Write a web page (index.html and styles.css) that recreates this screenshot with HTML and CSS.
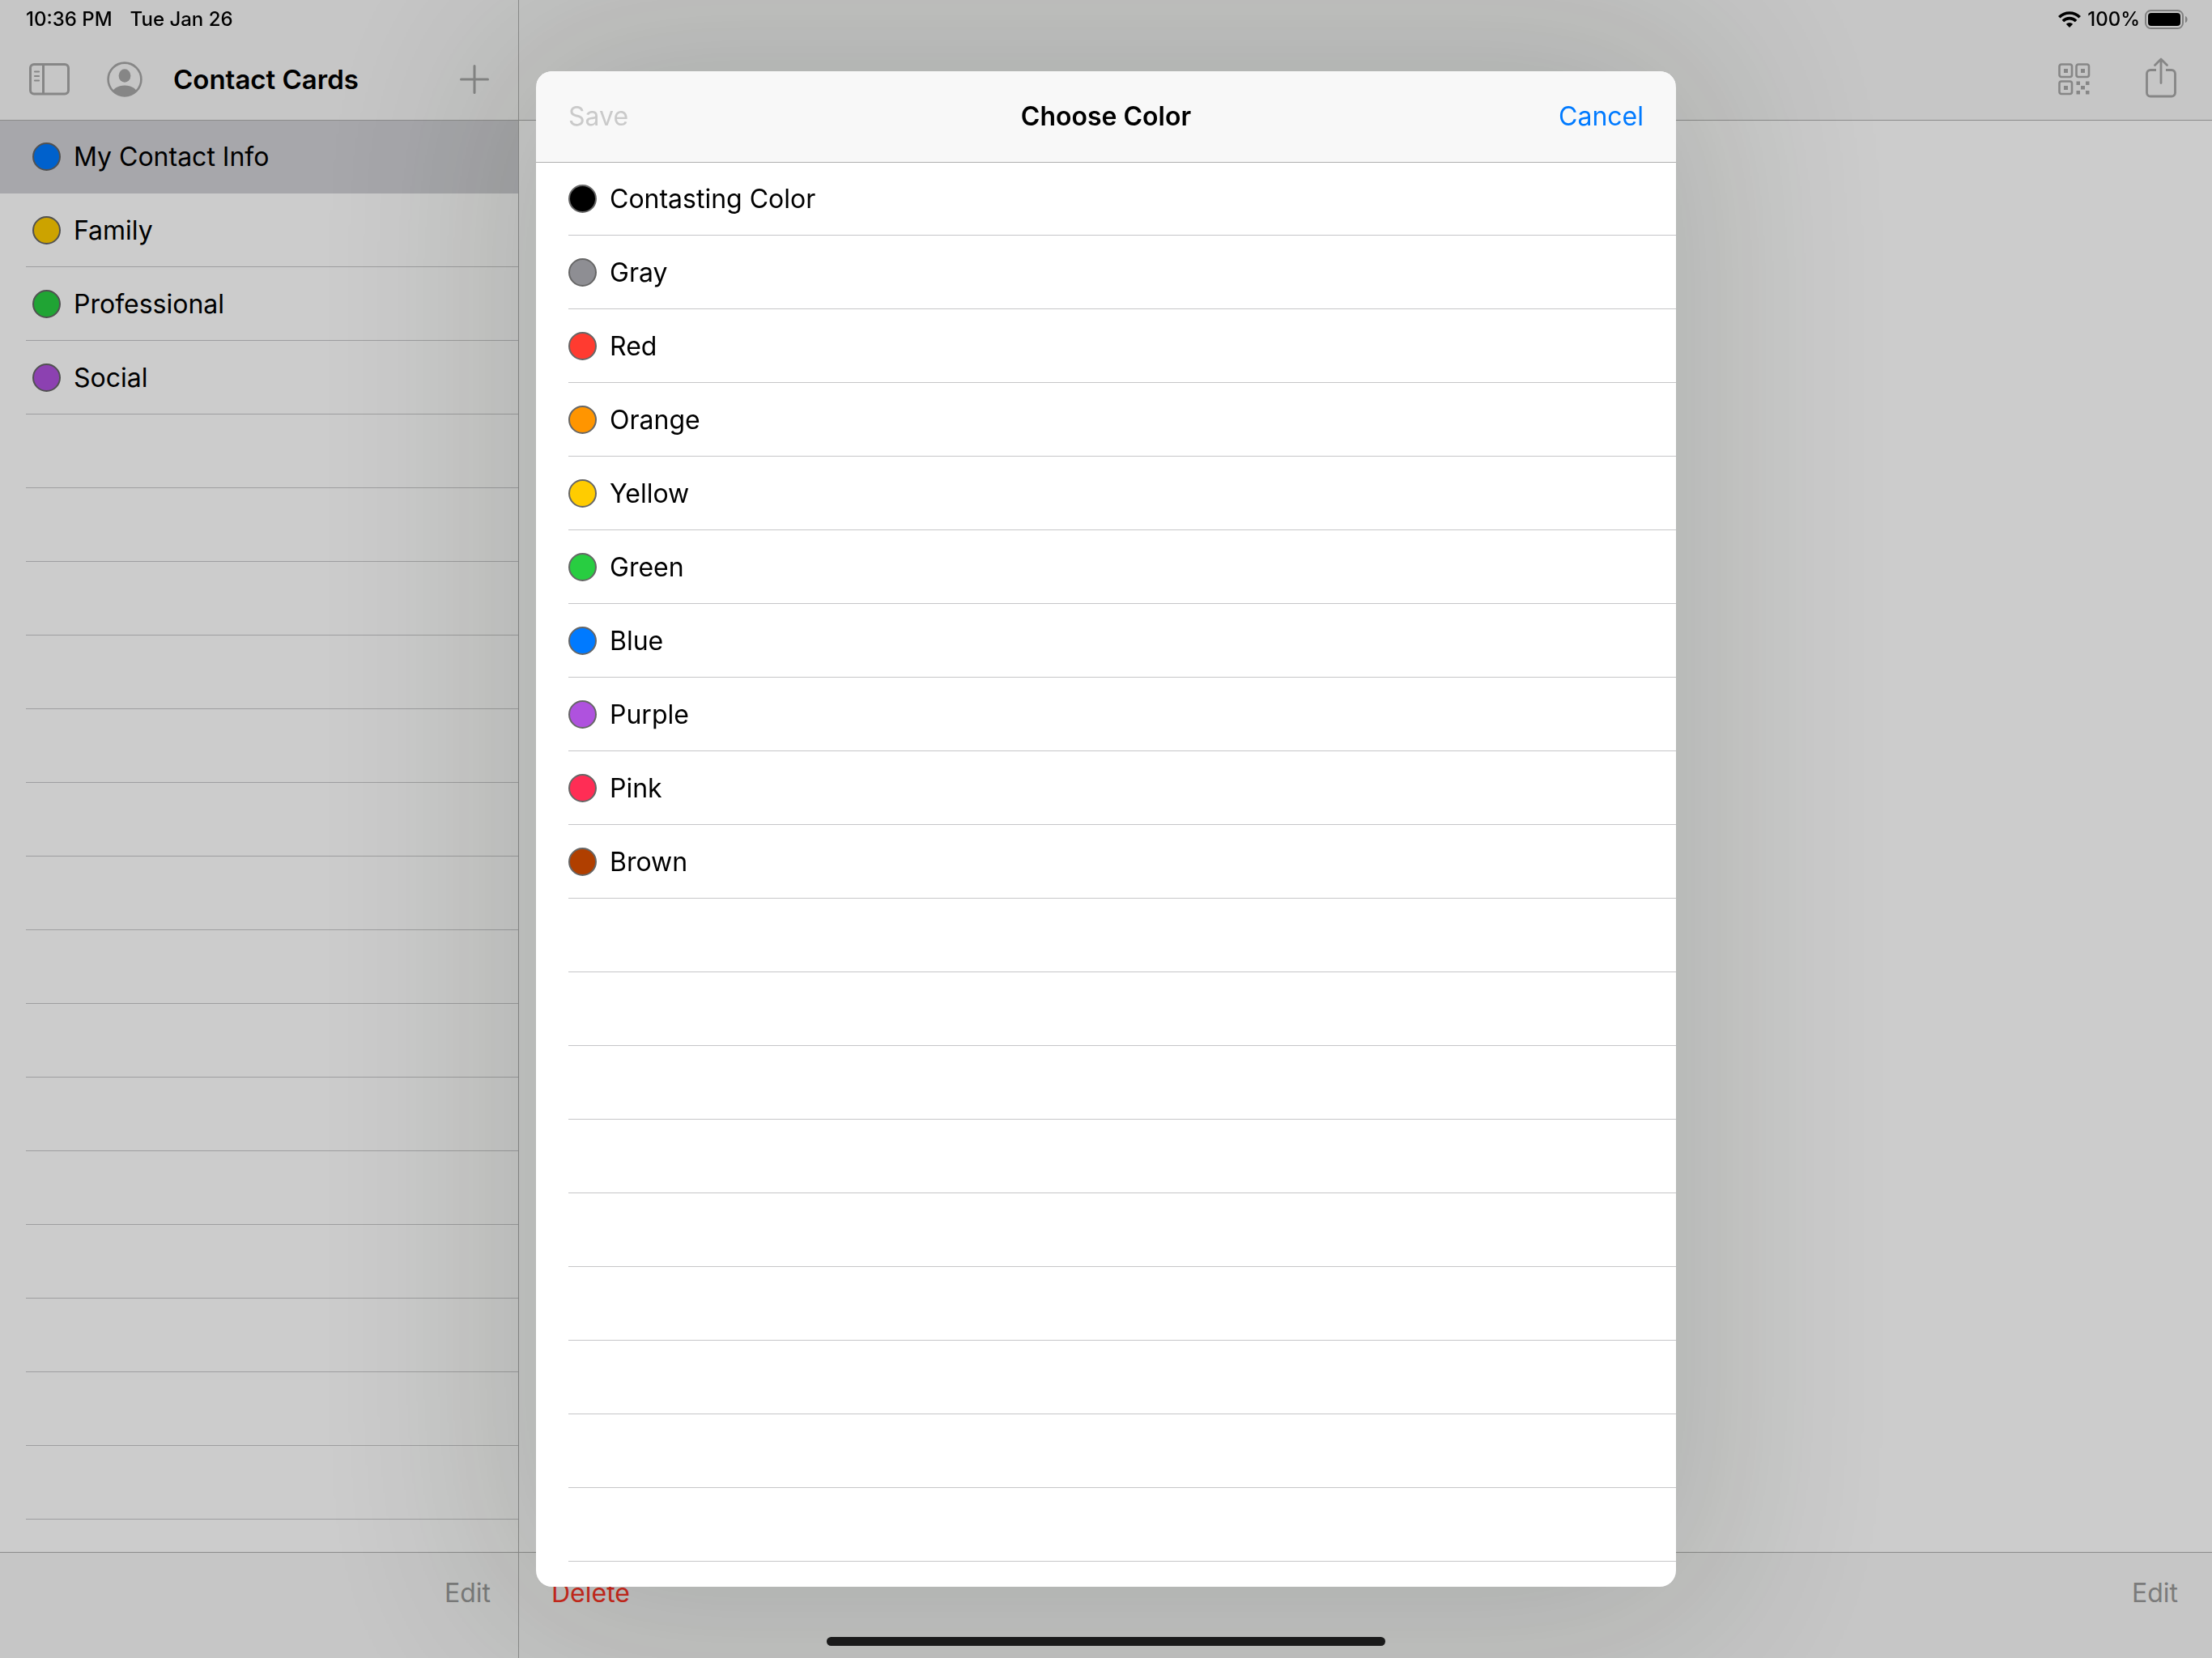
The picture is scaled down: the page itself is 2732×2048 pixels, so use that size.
FILE: index.html
```html
<!DOCTYPE html>
<html lang="en">
<head>
<meta charset="utf-8">
<meta name="viewport" content="width=device-width, initial-scale=1">
<title>Contact Cards</title>
<link rel="stylesheet" href="styles.css">
</head>
<body>
<div class="app">
  <aside class="sidebar">
    <header class="bar bar-top">
      <div class="toolbar">
        <button class="icon-button" type="button" aria-label="Toggle sidebar">
          <svg width="50" height="40" viewBox="0 0 50 40" fill="none" stroke="currentColor" stroke-width="3">
            <rect x="1.5" y="1.5" width="47" height="36.500" rx="4.500"/>
            <path d="M17.500 2v36"/>
            <path d="M7 10.500h5M7 16h5M7 21.500h5" stroke-width="2.200" stroke-linecap="round"/>
          </svg>
        </button>
        <button class="icon-button account" type="button" aria-label="Account">
          <svg width="44" height="44" viewBox="0 0 44 44">
            <clipPath id="face"><circle cx="22" cy="22" r="20"/></clipPath>
            <circle cx="22" cy="22" r="20.400" fill="none" stroke="currentColor" stroke-width="2.600"/>
            <ellipse cx="22" cy="17.500" rx="7.400" ry="8.300" fill="currentColor"/>
            <ellipse cx="22" cy="40" rx="15.500" ry="10.500" fill="currentColor" clip-path="url(#face)"/>
          </svg>
        </button>
        <h1 class="title">Contact Cards</h1>
        <button class="icon-button push" type="button" aria-label="Add card">
          <svg width="36" height="36" viewBox="0 0 36 36" fill="none" stroke="currentColor" stroke-width="3" stroke-linecap="round">
            <path d="M18 1.500v33M1.500 18h33"/>
          </svg>
        </button>
      </div>
    </header>
    <ul class="list">
      <li class="row"><button class="row-button selected" type="button"><span class="dot blue"></span>My Contact Info</button></li>
      <li class="row"><button class="row-button" type="button"><span class="dot yellow"></span>Family</button></li>
      <li class="row"><button class="row-button" type="button"><span class="dot green"></span>Professional</button></li>
      <li class="row"><button class="row-button" type="button"><span class="dot purple"></span>Social</button></li>
    </ul>
    <div class="empty-rows"></div>
    <footer class="bar bar-bottom">
      <button class="text-button muted push" type="button">Edit</button>
    </footer>
  </aside>
  <main class="detail">
    <header class="bar bar-top">
      <div class="toolbar">
        <button class="icon-button push" type="button" aria-label="Show QR code">
          <svg width="40" height="40" viewBox="0 0 40 40" fill="none" stroke="currentColor" stroke-width="2.600">
            <rect x="1.500" y="1.500" width="15.500" height="15.500" rx="2.500"/>
            <rect x="22.500" y="1.500" width="15.500" height="15.500" rx="2.500"/>
            <rect x="1.500" y="22.500" width="15.500" height="15.500" rx="2.500"/>
            <path fill="currentColor" stroke="none" d="M7 7h5v5H7zM28 7h5v5h-5zM7 28h5v5H7zM22.500 22.500h4.500v4.500h-4.500zM34 22.500h4.500v4.500H34zM28 28h5v4.500h-5zM22.500 34h4.500v4.500h-4.500zM34 34h4.500v4.500H34z"/>
          </svg>
        </button>
        <button class="icon-button share" type="button" aria-label="Share">
          <svg width="38" height="50" viewBox="0 0 38 50" fill="none" stroke="currentColor" stroke-width="2.800" stroke-linecap="round" stroke-linejoin="round">
            <path stroke-linecap="butt" d="M13 15.500H6a4.500 4.500 0 0 0-4.500 4.500v23.500A4.500 4.500 0 0 0 6 48h26a4.500 4.500 0 0 0 4.500-4.500V20a4.500 4.500 0 0 0-4.500-4.500h-7"/>
            <path d="M19 31.500V3M11.500 9.500L19 2l7.500 7.500"/>
          </svg>
        </button>
      </div>
    </header>
    <footer class="bar bar-bottom">
      <button class="text-button danger" type="button">Delete</button>
      <button class="text-button muted push" type="button">Edit</button>
    </footer>
  </main>
</div>

<div class="overlay">
  <section class="dialog" role="dialog" aria-modal="true" aria-labelledby="dialog-title">
    <header class="dialog-header">
      <button class="text-button save" type="button" disabled>Save</button>
      <h2 class="title" id="dialog-title">Choose Color</h2>
      <button class="text-button cancel" type="button">Cancel</button>
    </header>
    <ul class="list">
      <li class="row"><button class="row-button" type="button"><span class="dot black"></span>Contasting Color</button></li>
      <li class="row"><button class="row-button" type="button"><span class="dot gray"></span>Gray</button></li>
      <li class="row"><button class="row-button" type="button"><span class="dot red"></span>Red</button></li>
      <li class="row"><button class="row-button" type="button"><span class="dot orange"></span>Orange</button></li>
      <li class="row"><button class="row-button" type="button"><span class="dot yellow"></span>Yellow</button></li>
      <li class="row"><button class="row-button" type="button"><span class="dot green"></span>Green</button></li>
      <li class="row"><button class="row-button" type="button"><span class="dot blue"></span>Blue</button></li>
      <li class="row"><button class="row-button" type="button"><span class="dot purple"></span>Purple</button></li>
      <li class="row"><button class="row-button" type="button"><span class="dot pink"></span>Pink</button></li>
      <li class="row"><button class="row-button" type="button"><span class="dot brown"></span>Brown</button></li>
    </ul>
    <div class="empty-rows"></div>
  </section>
</div>

<div class="status-bar">
  <span>10:36 PM</span>
  <span>Tue Jan 26</span>
  <span class="status-right">
    <svg width="28" height="20" viewBox="0 0 28 20" fill="none" stroke="#000" stroke-width="3.600">
      <path d="M1.300 7.300a18 18 0 0 1 25.400 0"/>
      <path d="M5.900 12a11.500 11.500 0 0 1 16.200 0"/>
      <path d="M14 20l-4.200-4.300a6 6 0 0 1 8.400 0z" fill="#000" stroke="none"/>
    </svg>
    <span class="percent">100%</span>
    <svg width="53" height="24" viewBox="0 0 53 24">
      <rect x="1" y="1" width="46" height="22" rx="6.500" fill="none" stroke="#808080" stroke-width="2"/>
      <rect x="4" y="4" width="40" height="16" rx="4" fill="#000"/>
      <path d="M50 8c3.500 1 3.500 7 0 8z" fill="#808080"/>
    </svg>
  </span>
</div>
<div class="home-indicator"></div>
</body>
</html>
```
FILE: styles.css
```css
* {
  box-sizing: border-box;
}

:root {
  --row: 91px;
  --separator: #c6c6c8;
  --bar: #f8f8f8;
  --bar-line: #b0b0b0;
}

body {
  margin: 0;
  background: #fff;
  color: #000;
  font-family: Inter, "Liberation Sans", sans-serif;
  font-size: 32px;
  line-height: 40px;
}

button {
  padding: 0;
  border: 0;
  background: none;
  color: inherit;
  font: inherit;
}

svg {
  display: block;
}

.app {
  display: grid;
  grid-template-columns: 640px 1fr;
  height: 100vh;
}

.sidebar,
.detail {
  display: flex;
  flex-direction: column;
  min-width: 0;
  min-height: 0;
}

.detail {
  justify-content: space-between;
  border-left: 1px solid var(--bar-line);
}

/* Bars */

.bar {
  position: relative;
  flex: none;
  background: var(--bar);
}

.bar-top {
  padding-top: 48px;
  box-shadow: 0 1px 0 var(--bar-line);
}

.toolbar {
  display: flex;
  align-items: center;
  height: 100px;
  padding: 0 36px;
}

.detail .toolbar {
  padding-right: 44px;
}

.bar-bottom {
  display: flex;
  align-items: center;
  height: 131px;
  padding: 0 34px 30px 40px;
  border-top: 1px solid var(--bar-line);
}

.detail .bar-bottom {
  padding-right: 42px;
}

.icon-button {
  flex: none;
  color: #a8a8a8;
}

.account {
  margin: 0 38px 0 46px;
}

.share {
  margin: 0 0 4px 68px;
}

.push {
  margin-left: auto;
}

.title {
  margin: 0;
  font-size: 33px;
  font-weight: 600;
  white-space: nowrap;
}

.dialog .title {
  font-size: 32px;
}

.muted {
  color: #9a9a9a;
}

.danger {
  color: #ff3224;
}

/* Lists */

.list {
  flex: none;
  margin: 0;
  padding: 0;
  list-style: none;
}

.row {
  height: var(--row);
}

.row-button {
  display: flex;
  align-items: center;
  gap: 16px;
  width: 100%;
  height: 100%;
  padding-left: 40px;
  background: linear-gradient(var(--separator), var(--separator)) 40px 100% / 100% 1px no-repeat;
  text-align: left;
}

.sidebar .row-button {
  background-position: 32px 100%;
}

.sidebar .selected {
  background: #d1d1d6;
}

.empty-rows {
  flex: 1;
  min-height: 0;
  margin-left: 40px;
  background: repeating-linear-gradient(transparent 0 90px, var(--separator) 90px 91px);
}

.sidebar .empty-rows {
  margin-left: 32px;
}

.dot {
  flex: none;
  width: 35px;
  height: 35px;
  border: 2px solid #666;
  border-radius: 50%;
}

.black { background: #000; }
.gray { background: #8e8e93; }
.red { background: #ff3b30; }
.orange { background: #ff9500; }
.yellow { background: #ffcc00; }
.green { background: #28cd41; }
.blue { background: #007aff; }
.purple { background: #af52de; }
.pink { background: #ff2d55; }
.brown { background: #b03f00; }

/* Dialog */

.overlay {
  position: fixed;
  inset: 0;
  display: flex;
  justify-content: center;
  padding: 88px 40px;
  background: rgba(0, 0, 0, 0.2);
}

.dialog {
  display: flex;
  flex-direction: column;
  width: 100%;
  max-width: 1408px;
  border-radius: 20px;
  background: #fff;
  box-shadow: 0 0 280px 50px rgba(20, 34, 12, 0.16);
  overflow: hidden;
}

.dialog-header {
  position: relative;
  display: grid;
  grid-template-columns: 1fr auto 1fr;
  align-items: center;
  flex: none;
  height: 112px;
  padding: 0 40px;
  background: var(--bar);
  box-shadow: 0 1px 0 var(--bar-line);
}

.save {
  justify-self: start;
  color: #cacaca;
}

.cancel {
  justify-self: end;
  color: #007aff;
}

/* System chrome */

.status-bar {
  position: fixed;
  inset: 0 0 auto;
  display: flex;
  align-items: center;
  gap: 22px;
  height: 48px;
  padding: 0 30px 0 32px;
  font-size: 24px;
  font-weight: 500;
}

.status-right {
  display: flex;
  align-items: center;
  margin-left: auto;
}

.percent {
  margin: 0 6px 0 8px;
}

.home-indicator {
  position: fixed;
  bottom: 15px;
  left: 50%;
  width: 690px;
  height: 11px;
  margin-left: -345px;
  border-radius: 6px;
  background: #1a1a1a;
}
```
